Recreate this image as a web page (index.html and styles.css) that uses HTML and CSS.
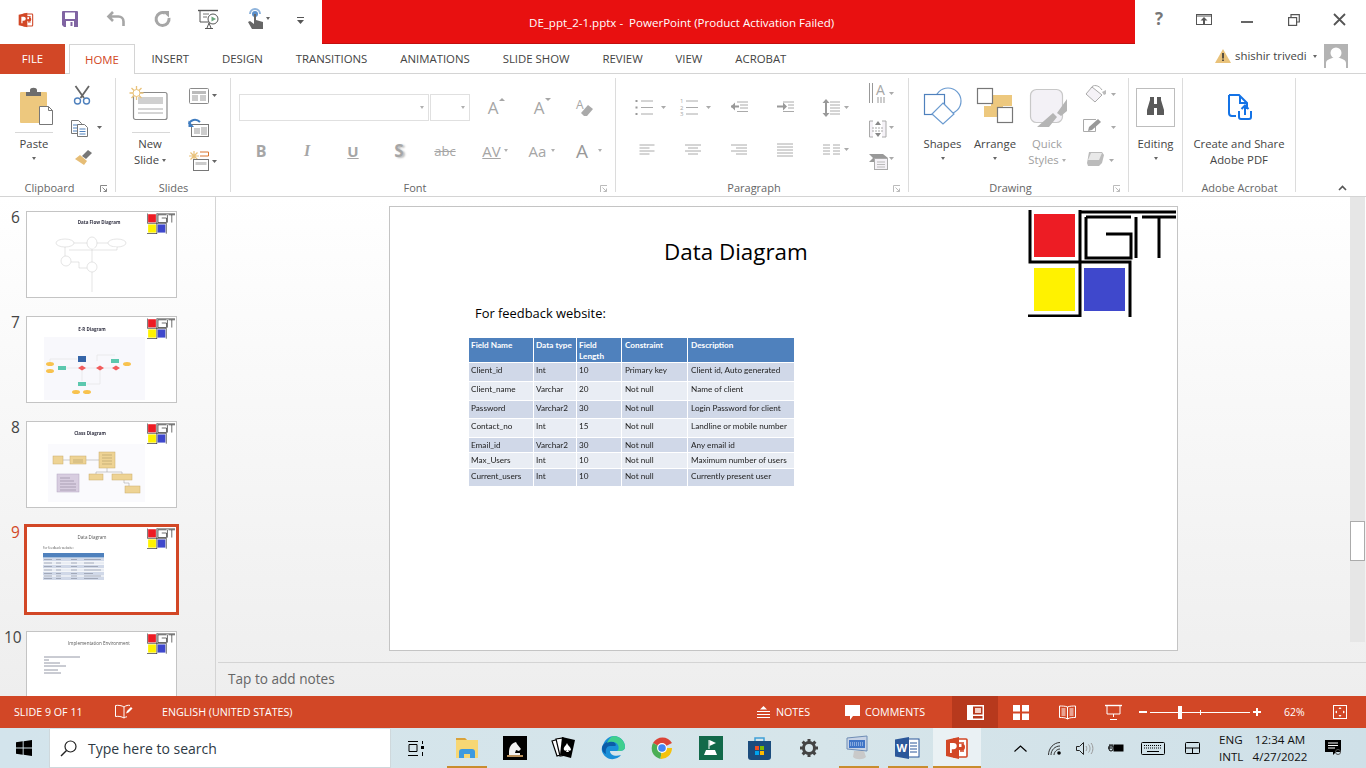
FILE: index.html
```html
<!DOCTYPE html>
<html lang="en">
<head>
<meta charset="utf-8">
<title>DE_ppt_2-1.pptx - PowerPoint</title>
<link rel="stylesheet" href="styles.css">
</head>
<body>
<svg class="defs" width="0" height="0" aria-hidden="true">
  <defs>
    <symbol id="logo" viewBox="0 0 148 108">
      <rect x="6" y="5" width="41" height="43" fill="#ed1c24"/>
      <rect x="6" y="59" width="41" height="43" fill="#fff200"/>
      <rect x="56" y="59" width="41" height="43" fill="#3f48cc"/>
      <path d="M2 1V53H102V108M52 1V108M0 107H53M52 3H148M58 8H103M58 8V49H103V25H78M108 8V49M114 8H148M131 8V49" fill="none" stroke="#000" stroke-width="3"/>
    </symbol>
    <symbol id="ppt" viewBox="0 0 24 24">
      <path d="M9 3h12a1 1 0 0 1 1 1v16a1 1 0 0 1-1 1H9z" fill="#fff" stroke="#d24726" stroke-width="1.6"/>
      <path d="M13 7h6M15 12h4M15 15h4" stroke="#d24726" stroke-width="1.5"/>
      <path d="M13 11a3.5 3.5 0 1 0 3.5-3.5V11z" fill="#d24726"/>
      <path d="M1 4 14 1v22L1 20z" fill="#d24726"/>
      <path d="M5 17V7h3.6a3 3 0 0 1 0 6.2H6.8V17z" fill="#fff"/>
    </symbol>
  </defs>
</svg>

<div class="app">
  <header class="titlebar">
    <div class="qat">
      <svg class="q1" width="16" height="16" viewBox="0 0 24 24"><use href="#ppt"/></svg>
      <svg class="q2" width="16" height="16" viewBox="0 0 16 16"><path d="M0 1a1 1 0 0 1 1-1h14a1 1 0 0 1 1 1v15H2l-2-2z" fill="#8064a2"/><rect x="3" y="1.500" width="10" height="6.500" fill="#fff"/><rect x="4" y="10" width="8" height="6" fill="#fff"/><rect x="8.500" y="11" width="2" height="4" fill="#8064a2"/></svg>
      <svg class="q3" width="18" height="16" viewBox="0 0 18 16"><path d="M6 1 1.500 5.500 6 10M2 5.500h9.500a5 5 0 0 1 5 5V15" fill="none" stroke="#a6a6a6" stroke-width="2.600"/></svg>
      <svg class="q4" width="17" height="16" viewBox="0 0 17 16"><path d="M11 2a6.500 6.500 0 1 0 4 5" fill="none" stroke="#a6a6a6" stroke-width="3"/><path d="M8 0 15 0v6.500z" fill="#a6a6a6"/></svg>
      <svg class="q5" width="22" height="19" viewBox="0 0 22 19"><path d="M0 .5h20" stroke="#555" stroke-width="1.400"/><path d="M2 1v11h10" fill="none" stroke="#555"/><path d="M5 4h6M5 7h4" stroke="#777"/><path d="M9 18l2-5 2 5M7 18.500h8" fill="none" stroke="#555"/><circle cx="15" cy="9" r="5" fill="#fff" stroke="#555"/><path d="M13.500 6.500 18 9l-4.500 2.500z" fill="#6aa67c"/></svg>
      <svg class="q6" width="18" height="20" viewBox="0 0 18 20"><path d="M3 5a5 5 0 0 1 10 0" fill="none" stroke="#8fb4dc" stroke-width="2"/><circle cx="8" cy="5" r="3" fill="#5a8fcb"/><path d="M7 5h2v6l7 2v7H5L1 13l2-1 4 3z" fill="#666"/></svg>
      <span class="caret q7"></span>
      <svg class="q8" width="7" height="7" viewBox="0 0 7 7"><path d="M0 .5h7" stroke="#555"/><path d="M0 3h7L3.500 7z" fill="#555"/></svg>
    </div>
    <div class="title">DE_ppt_2-1.pptx -&nbsp; PowerPoint (Product Activation Failed)</div>
    <div class="winctl">
      <span class="help">?</span>
      <svg class="w1" width="16" height="11" viewBox="0 0 16 11"><rect x=".5" y=".5" width="15" height="10" fill="none" stroke="#555"/><path d="M1 2h14" stroke="#555"/><path d="M8 3 4.500 6.500H7V10h2V6.500h2.500z" fill="#555"/></svg>
      <svg class="w2" width="12" height="3" viewBox="0 0 12 3"><rect width="12" height="2" y="1" fill="#666"/></svg>
      <svg class="w3" width="12" height="12" viewBox="0 0 12 12"><path d="M3 3V.7h8.300V8H9" fill="none" stroke="#555" stroke-width="1.200"/><rect x=".6" y="3.600" width="8" height="7.800" fill="none" stroke="#555" stroke-width="1.200"/></svg>
      <svg class="w4" width="13" height="13" viewBox="0 0 13 13"><path d="M1 1l11 11M12 1 1 12" stroke="#555" stroke-width="1.800"/></svg>
    </div>
  </header>

  <nav class="tabs">
    <a class="tab-file">FILE</a>
    <a class="tab active">HOME</a>
    <a class="tab">INSERT</a>
    <a class="tab">DESIGN</a>
    <a class="tab">TRANSITIONS</a>
    <a class="tab">ANIMATIONS</a>
    <a class="tab">SLIDE SHOW</a>
    <a class="tab">REVIEW</a>
    <a class="tab">VIEW</a>
    <a class="tab">ACROBAT</a>
    <div class="user">
      <svg width="16" height="14" viewBox="0 0 16 14"><path d="M8 0 16 14H0z" fill="#e9c27a"/><path d="M7.200 4h1.600v5.500H7.200zM7.200 10.500h1.600V12H7.200z" fill="#333"/></svg>
      <span class="uname">shishir trivedi</span>
      <span class="caret"></span>
      <svg class="avatar" width="24" height="24" viewBox="0 0 24 24"><rect width="24" height="24" fill="#b3b3b3"/><circle cx="12" cy="9" r="5.500" fill="#fff"/><path d="M2 24v-5c0-3 4-4 6-5h8c2 1 6 2 6 5v5z" fill="#fff"/></svg>
    </div>
  </nav>

  <section class="ribbon">
    <div class="group g-clip">
      <div class="g-body">
        <div class="big b-paste">
          <svg class="big-ico" width="40" height="59" viewBox="0 0 40 59"><rect x="6" y="18" width="27" height="31" rx="1" fill="#edc87e"/><path d="M12 22v-4h4v-2c0-3 7-3 7 0v2h4v4z" fill="#6d6d6d"/><path d="M25.500 32.500h9l4 4v14h-13z" fill="#fff" stroke="#777"/><path d="M34.500 32.500v4h4" fill="none" stroke="#777"/><path d="M1 58.500h38" stroke="#d8d8d8"/></svg>
          <span class="blabel">Paste</span>
          <span class="caret"></span>
        </div>
        <div class="col3 c-clip">
          <svg width="45" height="33" viewBox="0 0 45 33"><path d="M10.500 18 19 6M14 18 5.500 6" stroke="#666" stroke-width="1.800"/><circle cx="7.500" cy="21" r="3" fill="none" stroke="#4f81bd" stroke-width="1.400"/><circle cx="16.500" cy="21" r="3" fill="none" stroke="#4f81bd" stroke-width="1.400"/></svg>
          <svg width="45" height="33" viewBox="0 0 45 33"><path d="M1.500 7.500h7l3 3v10h-10z" fill="#fff" stroke="#777"/><path d="M3 12h5M3 15h5M3 18h4" stroke="#4f81bd"/><path d="M7.500 11.500h7l3 3v9h-10z" fill="#fff" stroke="#777"/><path d="M9.500 16h6M9.500 18.500h6M9.500 21h6" stroke="#4f81bd"/><path d="M27 13h5l-2.500 3z" fill="#666"/></svg>
          <svg width="45" height="33" viewBox="0 0 45 33"><path d="M5 13l5-4 7 6-3 4z" fill="#e6bd76"/><path d="M12 10l6-6 4 3-6 6z" fill="#777"/></svg>
        </div>
      </div>
      <div class="g-label">Clipboard<svg class="launch" width="7" height="7" viewBox="0 0 7 7"><path d="M.5 7V.5H7" fill="none" stroke="#888"/><path d="M2.500 2.500 6.500 6.500M6.500 3.500v3h-3" fill="none" stroke="#888"/></svg></div>
    </div>

    <div class="group g-slides">
      <div class="g-body">
        <div class="big b-new">
          <svg class="big-ico" width="44" height="59" viewBox="0 0 44 59"><rect x="5.500" y="18.500" width="33.500" height="27" rx="2" fill="#fff" stroke="#8a8a8a" stroke-width="1.200"/><rect x="10" y="23" width="25" height="7" fill="#d0d0d0"/><path d="M10 35h25M10 39h25" stroke="#aaa"/><path d="M8.500 12v14M1.500 19h14M3.500 14l10 10M13.500 14l-10 10" stroke="#e9c27a" stroke-width="1.300"/><circle cx="8.500" cy="19" r="3.500" fill="#fff" stroke="#e9c27a"/><path d="M4 58.500h38" stroke="#d8d8d8"/></svg>
          <span class="blabel">New</span>
          <span class="blabel">Slide <span class="caret inl"></span></span>
        </div>
        <div class="col3 c-slides">
          <svg width="36" height="33" viewBox="0 0 36 33"><rect x=".5" y="8.500" width="19" height="15" rx="1" fill="#fff" stroke="#8a8a8a"/><rect x="3" y="11" width="14" height="3" fill="#bbb"/><rect x="3" y="15" width="6" height="6" fill="#ccc"/><path d="M11 16h6M11 18h6M11 20h6" stroke="#999"/><path d="M23 14h5l-2.500 3z" fill="#666"/></svg>
          <svg width="36" height="33" viewBox="0 0 36 33"><rect x="2.500" y="11.500" width="17" height="12" fill="#fff" stroke="#777"/><rect x="5" y="15" width="6" height="6" fill="#ccc"/><path d="M12 15h6M12 17h6M12 19h6M12 21h6" stroke="#999"/><path d="M0 11c1-4 7-6 11-2" fill="none" stroke="#3f7cbf" stroke-width="2"/><path d="M-.5 7.500 5 14H-.5z" fill="#3f7cbf"/></svg>
          <svg width="36" height="33" viewBox="0 0 36 33"><path d="M5 5v10M0 10h10M1.500 6.500l7 7M8.500 6.500l-7 7" stroke="#e9c27a" stroke-width="1.200"/><path d="M11 6h8.500v4H11" fill="none" stroke="#d9752f"/><rect x="4.500" y="13.500" width="15" height="11" fill="#fff" stroke="#777"/><rect x="6.500" y="16" width="11" height="3" fill="#ccc"/><path d="M23 14h5l-2.500 3z" fill="#666"/></svg>
        </div>
      </div>
      <div class="g-label">Slides</div>
    </div>

    <div class="group g-font">
      <div class="g-body rows">
        <div class="frow r-top">
          <div class="fbox fname"><span class="caret dis"></span></div>
          <div class="fbox fsize"><span class="caret dis"></span></div>
          <span class="fcell big-a">A<i class="up"></i></span>
          <span class="fcell big-a">A<i class="dn"></i></span>
          <span class="fcell"><svg width="20" height="20" viewBox="0 0 20 20"><text class="tic" x="1" y="11" font-size="12">A</text><path d="M6 15l7-8 5 4-6 7H9z" fill="#aaa"/></svg></span>
        </div>
        <div class="frow">
          <span class="fcell fb">B</span>
          <span class="fcell fi">I</span>
          <span class="fcell fu">U</span>
          <span class="fcell fs">S</span>
          <span class="fcell fabc">abc</span>
          <span class="fcell fav">AV<span class="caret dis"></span></span>
          <span class="fcell faa">Aa<span class="caret dis"></span></span>
          <span class="fcell fcol">A<span class="caret dis"></span></span>
        </div>
      </div>
      <div class="g-label">Font<svg class="launch" width="7" height="7" viewBox="0 0 7 7"><path d="M.5 7V.5H7" fill="none" stroke="#bbb"/><path d="M2.500 2.500 6.500 6.500M6.500 3.500v3h-3" fill="none" stroke="#bbb"/></svg></div>
    </div>

    <div class="group g-para">
      <div class="g-body">
        <div class="pgrid">
          <svg width="46" height="27" viewBox="0 0 46 27"><path d="M17 7h12M17 13.500h12M17 20h12" stroke="#aaa"/><path d="M11.500 7h3M11.500 13.500h3M11.500 20h3" stroke="#999" stroke-width="2" stroke-dasharray="2 1"/><path d="M37 12h5l-2.500 3z" fill="#aaa"/></svg>
          <svg width="46" height="27" viewBox="0 0 46 27"><path d="M16 7h12M16 13.500h12M16 20h12" stroke="#aaa"/><text class="tic" x="10" y="9" font-size="6">1</text><text class="tic" x="10" y="16" font-size="6">2</text><text class="tic" x="10" y="22" font-size="6">3</text><path d="M36 12h5l-2.500 3z" fill="#aaa"/></svg>
          <svg width="46" height="27" viewBox="0 0 46 27"><path d="M21 8h11M24 11h8M24 14h8M21 17.500h11" stroke="#aaa"/><path d="M15 12.500h8" stroke="#999" stroke-width="2"/><path d="M19 8.500v8l-4-4z" fill="#999"/></svg>
          <svg width="46" height="27" viewBox="0 0 46 27"><path d="M21 8h11M26 11h6M26 14h6M21 17.500h11" stroke="#aaa"/><path d="M15 12.500h8" stroke="#999" stroke-width="2"/><path d="M21 8.500v8l4-4z" fill="#999"/></svg>
          <svg width="46" height="27" viewBox="0 0 46 27"><path d="M22 8h10M22 11h10M22 14h10M22 17h10M22 20h10" stroke="#aaa"/><path d="M18 5l-3.500 4h2.500v10h-2.500L18 23l3.500-4H19V9h2.500z" fill="#999"/><path d="M36 12h5l-2.500 3z" fill="#aaa"/></svg>
          <svg width="46" height="27" viewBox="0 0 46 27"><path d="M15.500 8h15M15.500 11h10M15.500 14h15M15.500 17h10" stroke="#aaa"/></svg>
          <svg width="46" height="27" viewBox="0 0 46 27"><path d="M15 8h16M18 11h10M15 14h16M18 17h10" stroke="#aaa"/></svg>
          <svg width="46" height="27" viewBox="0 0 46 27"><path d="M15 8h16M20 11h11M15 14h16M20 17h11" stroke="#aaa"/></svg>
          <svg width="46" height="27" viewBox="0 0 46 27"><path d="M15 7h16M15 10h16M15 13h16M15 16h16M15 19h16" stroke="#aaa"/></svg>
          <svg width="46" height="27" viewBox="0 0 46 27"><path d="M15 8h7M25 8h7M15 11h7M25 11h7M15 14h7M25 14h7M15 17h7M25 17h7" stroke="#aaa"/><path d="M36 11h5l-2.500 3z" fill="#aaa"/></svg>
        </div>
        <div class="col3 c-para">
          <svg width="50" height="33" viewBox="0 0 50 33"><path d="M15.500 3v20M18.500 3v20M24 17v6M27 17v6M30 17v6" stroke="#999"/><text class="tic" x="22" y="15" font-size="14">A</text><path d="M35 12h5l-2.500 3z" fill="#aaa"/></svg>
          <svg width="50" height="33" viewBox="0 0 50 33"><path d="M19 8h-3.500v16H19M28 8h4v16h-4" fill="#f5f2f7" stroke="#aaa"/><path d="M24 8l-3 4h6zM24 24l-3-4h6z" fill="#888"/><path d="M18 15h12M18 18h12" stroke="#aaa" stroke-dasharray="2 1"/><path d="M35 13h5l-2.500 3z" fill="#aaa"/></svg>
          <svg width="50" height="33" viewBox="0 0 50 33"><path d="M15 8h14l5 4-5 4H15l4-4z" fill="#999"/><rect x="20.500" y="12.500" width="13" height="11" fill="#f5f2f7" stroke="#aaa"/><path d="M23 16h8M23 18.500h8M23 21h8" stroke="#bbb"/><path d="M35 11h5l-2.500 3z" fill="#aaa"/></svg>
        </div>
      </div>
      <div class="g-label">Paragraph<svg class="launch" width="7" height="7" viewBox="0 0 7 7"><path d="M.5 7V.5H7" fill="none" stroke="#bbb"/><path d="M2.500 2.500 6.500 6.500M6.500 3.500v3h-3" fill="none" stroke="#bbb"/></svg></div>
    </div>

    <div class="group g-draw">
      <div class="g-body">
        <div class="big b-shapes">
          <svg class="big-ico" width="53" height="59" viewBox="0 0 53 59"><circle cx="32" cy="27" r="13" fill="#fff" stroke="#6b9bd0" stroke-width="1.200"/><rect x="8.500" y="20.500" width="20" height="20" fill="#fff" stroke="#4f81bd" stroke-width="1.200"/><path d="M27 29 38 40 27 50 16 40z" fill="#fff" stroke="#6b9bd0" stroke-width="1.200"/></svg>
          <span class="blabel">Shapes</span>
          <span class="caret"></span>
        </div>
        <div class="big b-arr">
          <svg class="big-ico" width="52" height="59" viewBox="0 0 52 59"><rect x="22" y="21" width="21" height="11" fill="#edc87e"/><rect x="15" y="32" width="19" height="11" fill="#edc87e"/><rect x="8.500" y="14.500" width="15" height="15" fill="#fff" stroke="#777" stroke-width="1.200"/><rect x="28.500" y="33.500" width="15" height="15" fill="#fff" stroke="#777" stroke-width="1.200"/></svg>
          <span class="blabel">Arrange</span>
          <span class="caret"></span>
        </div>
        <div class="big b-quick">
          <svg class="big-ico" width="52" height="59" viewBox="0 0 52 59"><rect x="9.500" y="15.500" width="32" height="33" rx="6" fill="#f3f1f6" stroke="#c8c8c8" stroke-width="1.200"/><path d="M46 25V37l-6 5-4-3zM32 39l4 4-8 10H16z" fill="#b5b5b5"/></svg>
          <span class="blabel dim">Quick</span>
          <span class="blabel dim">Styles <span class="caret inl dis"></span></span>
        </div>
        <div class="col3 c-draw">
          <svg width="50" height="33" viewBox="0 0 50 33"><path d="M12 7l10 8-7 7-9-8z" fill="#f5f2f7" stroke="#aaa"/><path d="M11 8c2-4 8-3 11 2" fill="none" stroke="#aaa"/><path d="M22 12l2 3 2-1 0-4z" fill="#bbb"/><path d="M31 13h5l-2.500 3z" fill="#aaa"/></svg>
          <svg width="50" height="33" viewBox="0 0 50 33"><path d="M16 6.500H3.500v12h12V13" fill="#fff" stroke="#aaa"/><path d="M8 18l1-4 9-8 3 3-9 8z" fill="#999"/><path d="M31 13h5l-2.500 3z" fill="#aaa"/></svg>
          <svg width="50" height="33" viewBox="0 0 50 33"><path d="M9 6h13l2 3-2 8-3 3H8l-1-3z" fill="#bbb"/><path d="M11 7h11l-3 7H8z" fill="#e8e8e8"/><path d="M29 13h5l-2.500 3z" fill="#aaa"/></svg>
        </div>
      </div>
      <div class="g-label">Drawing<svg class="launch" width="7" height="7" viewBox="0 0 7 7"><path d="M.5 7V.5H7" fill="none" stroke="#bbb"/><path d="M2.500 2.500 6.500 6.500M6.500 3.500v3h-3" fill="none" stroke="#bbb"/></svg></div>
    </div>

    <div class="group g-edit">
      <div class="g-body">
        <div class="big b-edit">
          <svg class="big-ico" width="53" height="59" viewBox="0 0 53 59"><rect x="7.500" y="14.500" width="38" height="38" fill="#fff" stroke="#bdbdbd"/><path d="M21 26v-3h4v3h0v15h-7v-5zM28 26v-3h4v3l3 10v5h-7z" fill="#5a5a5a"/><rect x="25" y="30" width="3" height="4" fill="#5a5a5a"/></svg>
          <span class="blabel">Editing</span>
          <span class="caret"></span>
        </div>
      </div>
      <div class="g-label"></div>
    </div>

    <div class="group g-adobe">
      <div class="g-body">
        <div class="big b-adobe">
          <svg class="big-ico" width="112" height="59" viewBox="0 0 112 59"><path d="M46 21h10l8 8v6M46 21v18c0 2 1 3 3 3h4" fill="none" stroke="#1473e6" stroke-width="2"/><path d="M57 22v7h7" fill="none" stroke="#1473e6" stroke-width="2"/><path d="M56 37v6a2 2 0 0 0 2 2h8a2 2 0 0 0 2-2v-6" fill="none" stroke="#1473e6" stroke-width="2"/><path d="M62 41v-9M58.500 35l3.500-3.500 3.500 3.500" fill="none" stroke="#1473e6" stroke-width="2"/></svg>
          <span class="blabel">Create and Share</span>
          <span class="blabel">Adobe PDF</span>
        </div>
      </div>
      <div class="g-label">Adobe Acrobat</div>
    </div>

    <div class="g-rest">
      <svg width="9" height="6" viewBox="0 0 9 6"><path d="M1 5l3.500-3.500L8 5" fill="none" stroke="#555" stroke-width="1.600"/></svg>
    </div>
  </section>

  <main class="workspace">
    <aside class="thumbs">
      <div class="thumb">
        <span class="num">6</span>
        <svg class="mini" viewBox="0 0 149 85">
          <text class="mt" x="72" y="12">Data Flow Diagram</text>
          <g class="flow"><ellipse cx="38" cy="31" rx="9" ry="4"/><ellipse cx="65" cy="31" rx="5" ry="6"/><ellipse cx="90" cy="31" rx="9" ry="4"/><circle cx="39" cy="49" r="5"/><circle cx="65" cy="55" r="5"/><path d="M47 31h13M70 31h11M38 35v9M65 37v13M42 38h48v-3M44 50h8v6h8M65 60v20"/></g>
          <use href="#logo" x="120" y="1" width="28" height="21"/>
        </svg>
      </div>
      <div class="thumb">
        <span class="num">7</span>
        <svg class="mini" viewBox="0 0 149 85">
          <rect x="17" y="20" width="101" height="63" fill="#f8f8fc"/>
          <text class="mt" x="65" y="14">E-R Diagram</text>
          <path d="M23 47V42H50M35 51H90M73 51V67H60M55 51V64M70 44V38H88" fill="none" stroke="#ddd" stroke-width=".5"/>
          <rect x="51" y="39" width="8" height="6" fill="#3565a8"/>
          <g fill="#5cc8ae"><rect x="31" y="49" width="8" height="4"/><rect x="84" y="42" width="8" height="4"/><rect x="51" y="65" width="8" height="4"/></g>
          <g fill="#f25c5c"><path d="M51 51l4-2.500 4 2.500-4 2.500zM69 51l4-2.500 4 2.500-4 2.500zM85 51l4-2.500 4 2.500-4 2.500z"/></g>
          <g fill="#f8c24e"><ellipse cx="23" cy="47" rx="4" ry="2"/><ellipse cx="23" cy="54" rx="4" ry="2"/><ellipse cx="100" cy="47" rx="4" ry="2"/><ellipse cx="49" cy="75" rx="4" ry="2"/><ellipse cx="60" cy="75" rx="4" ry="2"/></g>
          <use href="#logo" x="120" y="1" width="28" height="21"/>
        </svg>
      </div>
      <div class="thumb">
        <span class="num">8</span>
        <svg class="mini" viewBox="0 0 149 85">
          <rect x="21" y="22" width="97" height="58" fill="#fafafd"/>
          <text class="mt" x="63" y="13">Class Diagram</text>
          <path d="M36 38h7M59 38h13M80 46v4H69v2M80 50h15v2M97 58v3h5v3" fill="none" stroke="#999" stroke-width=".5"/>
          <g fill="#eed394" stroke="#c9ad6b" stroke-width=".5"><rect x="26" y="34" width="10" height="8"/><rect x="43" y="34" width="16" height="8"/><rect x="72" y="30" width="16" height="16"/><rect x="62" y="52" width="14" height="6"/><rect x="85" y="52" width="20" height="6"/><rect x="98" y="64" width="15" height="7"/></g>
          <path d="M75 33h10M75 36h10M75 39h10M75 42h10M46 38h10M46 40h10" stroke="#b09a66" stroke-width=".6"/>
          <rect x="30" y="52" width="22" height="18" fill="#d8cde0" stroke="#b5a6c2" stroke-width=".5"/>
          <path d="M33 56h10M33 59h14M33 62h16M33 65h16M33 68h16" stroke="#8f8299" stroke-width=".6"/>
          <use href="#logo" x="120" y="1" width="28" height="21"/>
        </svg>
      </div>
      <div class="thumb current">
        <span class="num">9</span>
        <svg class="mini" viewBox="0 0 149 85">
          <text class="mt light" x="65" y="12">Data Diagram</text>
          <text class="mb" x="16" y="22">For feedback website:</text>
          <rect x="16" y="26" width="61" height="4.500" fill="#4f81bd"/>
          <g fill="#d0d8e8"><rect x="16" y="31" width="61" height="3"/><rect x="16" y="38" width="61" height="3"/><rect x="16" y="45" width="61" height="3"/><rect x="16" y="50" width="61" height="3"/></g>
          <g fill="#e9edf4"><rect x="16" y="34.500" width="61" height="3"/><rect x="16" y="41.500" width="61" height="3"/><rect x="16" y="48" width="61" height="2"/></g>
          <path d="M17 32.500h8M29 32.500h5M44 32.500h6M57 32.500h17M17 36h8M29 36h5M44 36h6M57 36h10M17 39.500h8M29 39.500h5M44 39.500h6M57 39.500h14M17 43h8M29 43h5M44 43h6M57 43h17M17 46.500h8M29 46.500h5M44 46.500h6M57 46.500h9M17 49h8M29 49h5M44 49h6M57 49h17M17 51.500h8M29 51.500h5M44 51.500h6M57 51.500h14" stroke="#8d93a3" stroke-width=".7"/>
          <use href="#logo" x="120" y="1" width="28" height="21"/>
        </svg>
      </div>
      <div class="thumb">
        <span class="num ten">10</span>
        <svg class="mini" viewBox="0 0 149 85">
          <text class="mt light" x="72" y="13">Implementation Environment</text>
          <path d="M17 25h36M17 28h5M17 31h16M17 34h22M17 38h14M17 41h17" stroke="#7a7f90" stroke-width=".8"/>
          <use href="#logo" x="120" y="1" width="28" height="21"/>
        </svg>
      </div>
    </aside>

    <div class="editor">
      <div class="stage">
        <div class="slide">
          <h1 class="s-title">Data Diagram</h1>
          <p class="s-sub">For feedback website:</p>
          <table class="s-table">
            <colgroup><col class="c1"><col class="c2"><col class="c3"><col class="c4"><col class="c5"></colgroup>
            <thead><tr><th>Field Name</th><th>Data type</th><th>Field Length</th><th>Constraint</th><th>Description</th></tr></thead>
            <tbody>
              <tr><td>Client_id</td><td>Int</td><td>10</td><td>Primary key</td><td>Client id, Auto generated</td></tr>
              <tr><td>Client_name</td><td>Varchar</td><td>20</td><td>Not null</td><td>Name of client</td></tr>
              <tr><td>Password</td><td>Varchar2</td><td>30</td><td>Not null</td><td>Login Password for client</td></tr>
              <tr><td>Contact_no</td><td>Int</td><td>15</td><td>Not null</td><td>Landline or mobile number</td></tr>
              <tr><td>Email_id</td><td>Varchar2</td><td>30</td><td>Not null</td><td>Any email id</td></tr>
              <tr><td>Max_Users</td><td>Int</td><td>10</td><td>Not null</td><td>Maximum number of users</td></tr>
              <tr><td>Current_users</td><td>Int</td><td>10</td><td>Not null</td><td>Currently present user</td></tr>
            </tbody>
          </table>
          <svg class="s-logo" width="148" height="108"><use href="#logo" width="148" height="108"/></svg>
        </div>
        <div class="vscroll"><div class="vthumb"></div></div>
      </div>
      <div class="notes">Tap to add notes</div>
    </div>
  </main>

  <footer class="status">
    <span class="st-slide">SLIDE 9 OF 11</span>
    <svg class="st-book" width="18" height="16" viewBox="0 0 18 16"><path d="M9 3C7 1.500 3 1 .5 1.500v11c3-.5 6 0 8.500 1.500 1-.7 2-1.100 3-1.300M9 3v11M9 3c2-1.500 4-2 6-1.600" fill="none" stroke="#fff"/><path d="M11 9.500l1-2.500 4-4 1.500 1.500-4 4z" fill="#fff"/></svg>
    <span class="st-lang">ENGLISH (UNITED STATES)</span>
    <span class="st-grow"></span>
    <svg class="st-notes" width="13" height="13" viewBox="0 0 13 13"><path d="M6.500 0 10 3.500H3z" fill="#fff"/><path d="M0 5.500h13M0 8.500h13M0 11.500h13" stroke="#fff"/></svg>
    <span class="st-t1">NOTES</span>
    <svg class="st-comm" width="15" height="15" viewBox="0 0 15 15"><path d="M0 0h15v11H8l-3 4v-4H0z" fill="#fff"/></svg>
    <span class="st-t2">COMMENTS</span>
    <div class="view on"><svg width="17" height="15" viewBox="0 0 17 15"><path d="M0 0h17v15H0z" fill="#fff"/><path d="M6 1.500h9.500v8H6zM6 11h9.500v2.500H6z" fill="#b7391d"/><path d="M8 3h6v5H8z" fill="#f5cfc4"/></svg></div>
    <div class="view"><svg width="16" height="15" viewBox="0 0 16 15"><path d="M0 0h7v6.500H0zM9 0h7v6.500H9zM0 8.500h7V15H0zM9 8.500h7V15H9z" fill="#fff"/></svg></div>
    <div class="view"><svg width="17" height="15" viewBox="0 0 17 15"><path d="M8.500 2C6.500 1 3 1 .5 1v11.500c3 0 6 0 8 1.500 2-1.500 5-1.500 8-1.500V1c-2.500 0-6 0-8 1zM8.500 2v12" fill="none" stroke="#fff"/><path d="M2.500 4h4M2.500 6h4M2.500 8h4M2.500 10h4M10.500 4h4M10.500 6h4M10.500 8h4M10.500 10h4" stroke="#fff"/></svg></div>
    <div class="view"><svg width="17" height="15" viewBox="0 0 17 15"><path d="M0 .5h17" stroke="#fff" stroke-width="1.400"/><path d="M2 1v8h13V1M8.500 9v3M5 14.500h7" fill="none" stroke="#fff"/></svg></div>
    <div class="zoom">
      <span class="zm"></span>
      <div class="ztrack"><span class="ztick"></span><span class="zthumb"></span></div>
      <span class="zp"></span>
    </div>
    <span class="zpct">62%</span>
    <svg class="st-fit" width="14" height="14" viewBox="0 0 14 14"><rect x=".5" y=".5" width="13" height="13" fill="none" stroke="#fff"/><path d="M7 2l-1.500 2h3zM7 12l-1.500-2h3zM2 7l2-1.500v3zM12 7l-2-1.500v3z" fill="#fff"/></svg>
  </footer>

  <div class="taskbar">
    <svg class="start" width="16" height="16" viewBox="0 0 16 16"><path d="M0 2.300 6.700 1.300V7.500H0zM7.600 1.200 16 0V7.500H7.600zM0 8.400H6.700V14.700L0 13.700zM7.600 8.400H16V16L7.600 14.800z" fill="#000"/></svg>
    <div class="search">
      <svg width="17" height="17" viewBox="0 0 17 17"><circle cx="10.500" cy="6.500" r="5.500" fill="none" stroke="#222" stroke-width="1.200"/><path d="M6.500 10.500 1 16" stroke="#222" stroke-width="1.400"/></svg>
      <span>Type here to search</span>
    </div>
    <div class="tcell tv"><svg width="16" height="15" viewBox="0 0 16 15"><path d="M0 .5h10M0 14.500h10M1 3.500h8v7H1zM14.500 0v3M14.500 11v4" fill="none" stroke="#000"/><rect x="13" y="5" width="3" height="3" fill="#000"/></svg></div>
    <div class="tcell run ex"><svg width="22" height="20" viewBox="0 0 22 20"><path d="M0 0h9l2 2h11v18H0z" fill="#f7d774"/><path d="M0 0h9l2 2H0z" fill="#d9a23b"/><path d="M3 14a3 3 0 0 1 3-3h10a3 3 0 0 1 3 3v6h-5v-4H8v4H3z" fill="#3d9ae0"/></svg></div>
    <div class="tcell"><svg width="24" height="24" viewBox="0 0 24 24"><rect width="24" height="24" fill="#000"/><path d="M6 17c0-5 1-9 7-11l1 2 4 5-2 2-3-1-1 3h5v2H6z" fill="#f1f1f1"/><rect x="4" y="19" width="16" height="2" fill="#b9905a"/></svg></div>
    <div class="tcell"><svg width="25" height="24" viewBox="0 0 25 24"><path d="M1 5l7-2 4 15-6 2z" fill="#fff" stroke="#000" stroke-width="1.200"/><path d="M5 3l7-1 3 17-6 1z" fill="#fff" stroke="#000" stroke-width="1.200"/><path d="M11 1l13 3-4 18-11-3z" fill="#000"/><path d="M16 7c-1 3-4 4-3 7 1 1 2 1 3 0l-1 2h3l-1-2c1 1 2 1 3 0 0-3-3-4-4-7z" fill="#fff"/></svg></div>
    <div class="tcell"><svg width="24" height="24" viewBox="0 0 24 24"><path d="M2 9C4 3 9 0 13 0c6 0 11 5 11 11 0 3-3 4-6 4H9c0 4 5 6 11 4-3 4-10 6-15 2-5-4-5-9-3-12z" fill="#1a8fd8"/><path d="M2 9c3-4 9-5 12-2 1 1 1 3 0 3H9c-3 0-5 3-4 8C1 16 0 12 2 9z" fill="#0b5ca8"/><path d="M13 0c6 0 11 5 11 11 0 3-3 4-6 4h-2c2-1 2-4 1-6-2-4-8-4-11-2 2-4 4-7 7-7z" fill="#3fcf8e"/></svg></div>
    <div class="tcell"><svg width="22" height="22" viewBox="0 0 22 22"><path d="M11 11 2 6A11 11 0 0 1 21 6z" fill="#db4437"/><path d="M11 11 2 6a11 11 0 0 0 7.500 16z" fill="#4aae55"/><path d="M11 11H21A11 11 0 0 1 9.500 22z" fill="#f4c20d"/><circle cx="11" cy="11" r="5" fill="#fff"/><circle cx="11" cy="11" r="3.800" fill="#4285f4"/></svg></div>
    <div class="tcell"><svg width="24" height="24" viewBox="0 0 24 24"><rect width="24" height="24" fill="#12694a"/><path d="M10 4v9" stroke="#fff"/><path d="M10.500 4 17 7l-6.500 3z" fill="#fff"/><path d="M7 14h9l2 5H5z" fill="#fff"/></svg></div>
    <div class="tcell"><svg width="23" height="24" viewBox="0 0 23 24"><path d="M7 5V2h9v3" fill="none" stroke="#3fa0d8" stroke-width="1.500"/><path d="M0 5h23v16a3 3 0 0 1-3 3H3a3 3 0 0 1-3-3z" fill="#1b4c7d"/><rect x="7" y="10" width="4" height="4" fill="#f25022"/><rect x="12" y="10" width="4" height="4" fill="#7fba00"/><rect x="7" y="15" width="4" height="4" fill="#00a4ef"/><rect x="12" y="15" width="4" height="4" fill="#ffb900"/></svg></div>
    <div class="tcell"><svg width="18" height="18" viewBox="0 0 18 18"><circle cx="9" cy="9" r="5.500" fill="none" stroke="#444" stroke-width="3"/><path d="M9 0v3.500M9 14.500V18M0 9h3.500M14.500 9H18M2.600 2.600l2.500 2.500M12.900 12.900l2.500 2.500M15.400 2.600l-2.500 2.500M5.100 12.900l-2.500 2.500" stroke="#444" stroke-width="3"/></svg></div>
    <div class="tcell run"><svg width="24" height="24" viewBox="0 0 24 24"><path d="M1 2 21 0v15L1 13z" fill="#c8d4e6" stroke="#6f8db5"/><rect x="3" y="4" width="16" height="8" fill="#3f74c6"/><path d="M4 7h14M4 9h14" stroke="#cfe0f8" stroke-dasharray="1 1"/><path d="M8 15h10l2 6c-3 3-10 3-13 0z" fill="#c9c9c9"/></svg></div>
    <div class="tcell run"><svg width="24" height="22" viewBox="0 0 24 22"><rect x="9" y="2" width="15" height="18" fill="#fff" stroke="#2b579a"/><path d="M15 6h7M15 9h7M15 12h7M15 15h7" stroke="#2b579a"/><path d="M0 2.500 14 0v22L0 19.500z" fill="#2b579a"/><text class="ticw" x="1.500" y="15" font-size="11">W</text></svg></div>
    <div class="tcell run active"><svg width="24" height="24" viewBox="0 0 24 24"><use href="#ppt"/></svg></div>
    <div class="tray">
      <svg class="t1" width="13" height="7" viewBox="0 0 13 7"><path d="M.5 6.500 6.500 1l6 5.500" fill="none" stroke="#000" stroke-width="1.200"/></svg>
      <svg class="t2" width="13" height="13" viewBox="0 0 13 13"><path d="M.5 13C.5 6 6 .5 12 .5M3 13c0-5 4-9 9-9M6 13c0-3 3-6 6-6" fill="none" stroke="#333"/><circle cx="11" cy="11" r="1.800" fill="#000"/></svg>
      <svg class="t3" width="17" height="13" viewBox="0 0 17 13"><path d="M.5 4.500h3l4-4v12l-4-4h-3z" fill="none" stroke="#222"/><path d="M10 4c1 1.500 1 3.500 0 5M12.500 2.500c2 2.500 2 5.500 0 8M15 1c2.500 3 2.500 8 0 11" fill="none" stroke="#999"/></svg>
      <svg class="t4" width="16" height="12" viewBox="0 0 16 12"><rect x="5.500" y="2.500" width="10" height="7" fill="#000"/><path d="M0 6h4M2 2v2M4 2v2M1 4h4v3a2 2 0 0 1-4 0z" fill="none" stroke="#000"/></svg>
      <svg class="t5" width="24" height="13" viewBox="0 0 24 13"><rect x=".5" y=".5" width="23" height="12" rx="1" fill="none" stroke="#000"/><path d="M3 3.500h18M3 6h18" stroke="#000" stroke-dasharray="1 1"/><path d="M6 9.500h12" stroke="#000"/></svg>
      <svg class="t6" width="15" height="12" viewBox="0 0 15 12"><rect x=".5" y=".5" width="14" height="11" rx="1" fill="none" stroke="#000"/><path d="M.5 6h14M7.500 6v5.500" stroke="#000"/></svg>
      <div class="lang"><span>ENG</span><span>INTL</span></div>
      <div class="clock"><span>12:34 AM</span><span>4/27/2022</span></div>
      <svg class="t7" width="17" height="16" viewBox="0 0 17 16"><path d="M0 0h16v12h-5l-3 3v-3H0z" fill="#000"/><path d="M3 3h10M3 5.500h10M3 8h7" stroke="#fff"/><circle cx="13" cy="12" r="2.500" fill="none" stroke="#555"/></svg>
    </div>
  </div>
</div>
</body>
</html>
```

FILE: styles.css
```css
* { box-sizing: border-box; }
html, body { margin: 0; padding: 0; height: 100%; overflow: hidden; }
body { font-family: "Open Sans", "Noto Sans", sans-serif; color: #444; background: #fff; }
svg { display: block; flex: none; overflow: visible; }
.defs { position: absolute; }
.app { width: 1366px; height: 768px; display: flex; flex-direction: column; }

/* title bar */
.titlebar { height: 44px; display: flex; flex: none; }
.qat { width: 322px; display: flex; align-items: flex-start; flex: none; }
.q1 { margin: 12px 0 0 18px; }
.q2 { margin: 11px 0 0 28px; }
.q3 { margin: 11px 0 0 29px; }
.q4 { margin: 11px 0 0 29px; }
.q5 { margin: 10px 0 0 27px; }
.q6 { margin: 9px 0 0 27px; }
.q7 { margin: 17px 0 0 1px; }
.q8 { margin: 17px 0 0 27px; }
.title { width: 813px; flex: none; background: #e81010; color: #fff; border-bottom: 1px solid #c20e0e; font-size: 11.55px; line-height: 46px; padding-left: 207px; white-space: nowrap; }
.winctl { flex: 1; display: flex; align-items: flex-start; position: relative; }
.help { font: bold 17px/20px "Open Sans", sans-serif; color: #777; margin: 9px 0 0 20px; width: 10px; }
.w1 { margin: 14px 0 0 31px; }
.w2 { margin: 20px 0 0 29px; }
.w3 { margin: 14px 0 0 35px; }
.w4 { margin: 13px 0 0 33px; }

/* tabs */
.tabs { height: 30px; flex: none; display: flex; border-bottom: 1px solid #d4d4d4; font-size: 11.4px; color: #444; }
.tabs a { display: block; line-height: 30px; }
.tab-file { width: 65px; height: 30px; background: #d24726; color: #fff; text-align: center; margin-right: 4px; }
.tab { padding: 0 16.45px; }
.tab.active { width: 66px; height: 30px; padding: 0; text-align: center; background: #fff; color: #d24726; border: 1px solid #d4d4d4; border-bottom: 0; line-height: 29px !important; }
.user { margin-left: auto; display: flex; align-items: flex-start; padding-right: 18px; }
.user > svg:first-child { margin: 5px 4px 0 0; }
.uname { font-size: 11.4px; line-height: 24px; color: #444; width: 77px; white-space: nowrap; }
.user .caret { margin: 11px 7px 0 1px; }

/* caret */
.caret { display: block; width: 0; height: 0; flex: none; border-style: solid; border-width: 3px 2.500px 0; border-color: #666 transparent transparent; }
.caret.dis { border-top-color: #b0b0b0; }
.caret.inl { display: inline-block; vertical-align: middle; }

/* ribbon */
.ribbon { height: 123px; flex: none; display: flex; border-bottom: 1px solid #d4d4d4; }
.group { flex: none; display: flex; flex-direction: column; position: relative; }
.group::after { content: ""; position: absolute; right: 0; top: 4px; bottom: 4px; width: 1px; background: #dcdcdc; }
.g-body { flex: 1; display: flex; min-height: 0; }
.g-label { height: 16px; line-height: 16px; font-size: 11px; text-align: center; color: #666; position: relative; flex: none; }
.launch { position: absolute; right: 9px; top: 5px; }
.g-clip { width: 116px; }
.g-slides { width: 115px; }
.g-font { width: 385px; }
.g-para { width: 293px; }
.g-draw { width: 220px; }
.g-edit { width: 54px; }
.g-adobe { width: 113px; }
.g-clip .g-label, .g-font .g-label, .g-para .g-label, .g-draw .g-label { padding-right: 17px; }
.g-rest { flex: 1; display: flex; align-items: flex-end; justify-content: flex-end; padding: 0 19px 5px 0; }

.big { display: flex; flex-direction: column; align-items: center; flex: none; }
.big-ico { margin-bottom: 3px; }
.blabel { font-size: 11.3px; line-height: 16px; color: #444; white-space: nowrap; }
.blabel.dim { color: #a0a0a0; }
.big > .caret { margin-top: 5px; }
.b-paste { width: 40px; margin-left: 14px; }
.b-new { width: 44px; margin-left: 12px; }
.b-shapes { width: 53px; margin-left: 7px; }
.b-arr, .b-quick { width: 52px; }
.b-edit { width: 53px; }
.b-adobe { width: 112px; }
.col3 { display: flex; flex-direction: column; margin-top: 6px; flex: none; }
.c-clip { margin-left: 16px; }
.c-slides { margin-left: 17px; }
.c-para { margin-left: 0; }
.c-draw { margin-left: 7px; }

.tic { font-family: "Open Sans", sans-serif; fill: #a6a6a6; }
.ticw { font-family: "Open Sans", sans-serif; fill: #fff; font-weight: 700; }

.rows { flex-direction: column; padding: 20px 0 0 8px; gap: 16px; }
.frow { display: flex; height: 27px; align-items: center; flex: none; }
.fbox { height: 27px; border: 1px solid #e0e0e0; background: #fff; display: flex; align-items: center; justify-content: flex-end; padding-right: 4px; }
.fname { width: 190px; }
.fsize { width: 40px; margin-left: 1px; }
.fcell { width: 46px; height: 27px; display: flex; align-items: center; justify-content: center; color: #a6a6a6; font-size: 14px; flex: none; gap: 3px; position: relative; }
.big-a { font-size: 17px; }
.big-a i { position: absolute; left: 29px; top: 4px; width: 0; height: 0; border-style: solid; border-width: 0 3px 3px; border-color: transparent transparent #a6a6a6; }
.big-a i.dn { border-width: 3px 3px 0; border-color: #a6a6a6 transparent transparent; }
.frow:last-child { margin-left: -1px; }
.fb { font-weight: 700; font-size: 16px; }
.fi { font: italic 700 16px "Liberation Serif", serif; }
.fu { font-weight: 700; font-size: 15px; text-decoration: underline; }
.fs { font-weight: 700; font-size: 17px; text-shadow: 2px 1px 2px #bbb; }
.fabc { font-size: 13px; text-decoration: line-through; }
.fav { font-size: 15px; text-decoration: underline; text-decoration-thickness: 1px; padding-left: 8px; }
.faa { font-size: 15px; padding-left: 10px; gap: 5px; }
.fcol { font-size: 19px; color: #999; gap: 10px; font-weight: 500; padding-left: 12px; }

.pgrid { display: grid; grid-template-columns: repeat(5, 46px); grid-auto-rows: 27px; row-gap: 16px; margin: 20px 0 0 8px; flex: none; }

/* workspace */
.workspace { flex: 1; min-height: 0; display: flex; background: linear-gradient(#fff, #eee); }
.thumbs { width: 216px; flex: none; border-right: 1px solid #d4d4d4; padding-top: 14px; display: flex; flex-direction: column; gap: 18px; overflow: hidden; }
.thumb { display: flex; flex: none; height: 87px; }
.num { width: 26px; font-size: 15.5px; line-height: 17px; margin-top: -2px; padding-left: 11px; color: #444; flex: none; }
.num.ten { padding-left: 4px; }
.mini { width: 151px; height: 87px; border: 1px solid #c4c4c4; background: #fff; }
.mini > * { filter: blur(.25px); }
.thumb.current .num { color: #d24726; }
.thumb.current .mini { outline: 2px solid #d24726; border-color: #d24726; }
.mt { font: 700 4.5px "Open Sans", sans-serif; text-anchor: middle; fill: #334; }
.mt.light { font-weight: 400; fill: #555; }
.mb { font: 3px "Open Sans", sans-serif; fill: #555; }
.flow { fill: #fff; stroke: #b5b5b5; stroke-width: .35; }

.editor { flex: 1; min-width: 0; display: flex; flex-direction: column; }
.stage { height: 465px; flex: none; display: flex; align-items: flex-start; }
.slide { width: 789px; height: 445px; margin: 9px 0 0 173px; flex: none; background: #fff; border: 1px solid #c4c4c4; position: relative; color: #000; }
.s-title { position: absolute; left: 274px; top: 30px; margin: 0; white-space: nowrap; font: 400 22.4px/30px "Open Sans", sans-serif; color: #000; }
.s-sub { position: absolute; left: 85px; top: 97px; margin: 0; font-size: 12.9px; line-height: 18px; color: #000; white-space: nowrap; }
.s-logo { position: absolute; left: 638px; top: 2px; }
.s-table { position: absolute; left: 79px; top: 131px; width: 326px; table-layout: fixed; border-collapse: separate; border-spacing: 0; font: 8.2px/11px Lato, sans-serif; color: #222; filter: blur(.35px); }
.c1 { width: 65px; } .c2 { width: 43px; } .c3 { width: 45px; } .c4 { width: 66px; } .c5 { width: 107px; }
.s-table th, .s-table td { padding: 2px 0 0 2px; border: solid #fff; border-width: 0 1px 1px 0; vertical-align: top; text-align: left; overflow: hidden; white-space: nowrap; }
.s-table th { background: #4f81bd; color: #fff; height: 25px; white-space: normal; font-weight: 700; }
.s-table th:nth-child(n+4), .s-table td:nth-child(n+4) { padding-left: 3px; }
.s-table tbody tr:nth-child(odd) td { background: #d0d8e8; }
.s-table tbody tr:nth-child(even) td { background: #e9edf4; }
.s-table tr:nth-child(1) td, .s-table tr:nth-child(2) td, .s-table tr:nth-child(4) td { height: 19px; }
.s-table tr:nth-child(3) td, .s-table tr:nth-child(7) td { height: 18px; }
.s-table tr:nth-child(5) td { height: 15px; }
.s-table tr:nth-child(6) td { height: 16px; }

.vscroll { width: 15px; height: 445px; margin-left: auto; margin-right: 1px; background: #e6e6e6; flex: none; position: relative; }
.vthumb { position: absolute; top: 324px; left: 0; right: 0; height: 40px; background: #fff; border: 1px solid #ababab; }
.notes { flex: 1; margin-left: 2px; border-top: 1px solid #d4d4d4; padding: 6px 0 0 10px; font-size: 13.6px; line-height: 20px; color: #666; }

/* status */
.status { height: 32px; flex: none; background: #d24726; color: #fff; display: flex; align-items: center; font-size: 10.7px; }
.st-slide { margin-left: 14px; width: 70px; white-space: nowrap; }
.st-book { margin-left: 31px; }
.st-lang { margin-left: 29px; white-space: nowrap; }
.st-grow { flex: 1; }
.st-t1 { margin-left: 6px; width: 36px; }
.st-comm { margin-left: 33px; }
.st-t2 { margin-left: 5px; width: 63px; white-space: nowrap; }
.view { width: 46px; height: 32px; flex: none; display: flex; align-items: center; justify-content: center; }
.view.on { background: #b7391d; margin-left: 24px; }
.zoom { display: flex; align-items: center; width: 132px; flex: none; padding-left: 3px; }
.zm { width: 8px; height: 2px; background: #fff; flex: none; }
.ztrack { width: 100px; height: 1px; margin: 0 3px; background: #fff; position: relative; flex: none; }
.ztick { position: absolute; left: 50px; top: -2px; width: 1px; height: 5px; background: #fff; }
.zthumb { position: absolute; left: 28px; top: -6px; width: 4px; height: 13px; background: #fff; }
.zp { width: 8px; height: 8px; flex: none; background: linear-gradient(#fff, #fff) center/8px 2px no-repeat, linear-gradient(#fff, #fff) center/2px 8px no-repeat; }
.zpct { margin-left: 16px; width: 24px; font-size: 10.5px; flex: none; }
.st-fit { margin-left: 25px; margin-right: 19px; }

/* taskbar */
.taskbar { height: 40px; flex: none; display: flex; align-items: center; background: linear-gradient(90deg, #d3e4ec, #d6e5ea 60%, #cfe0e8); }
.start { margin: 0 17px 0 16px; }
.search { width: 342px; height: 39px; margin-top: 1px; background: #fff; border: 1px solid #cfd8dc; border-width: 0 1px 1px; display: flex; align-items: center; padding-left: 10px; gap: 11px; font-size: 14px; color: #2e3a44; flex: none; }
.tcell { width: 49px; height: 40px; flex: none; display: flex; align-items: center; justify-content: center; position: relative; }
.tcell.tv { width: 50px; padding-right: 1px; }
.tcell.ex svg { margin-left: 2px; }
.tcell.run::after { content: ""; position: absolute; left: 6px; right: 3px; bottom: 0; height: 2px; background: #c98d2e; }
.tcell.active { width: 48px; margin-left: 2px; background: #eaf1f4; }
.tcell.active::after { left: 0; right: 0; }
.tray { display: flex; align-items: center; flex: 1; min-width: 0; color: #111; }
.t1 { margin-left: 33px; }
.t2 { margin-left: 21px; }
.t3 { margin-left: 15px; }
.t4 { margin-left: 15px; }
.t5 { margin-left: 17px; }
.t6 { margin-left: 20px; }
.lang { margin-left: 19px; width: 34px; display: flex; flex-direction: column; font-size: 11.6px; line-height: 17px; }
.clock { width: 54px; display: flex; flex-direction: column; align-items: center; font-size: 11.6px; line-height: 17px; white-space: nowrap; }
.t7 { margin-left: 18px; }
```
